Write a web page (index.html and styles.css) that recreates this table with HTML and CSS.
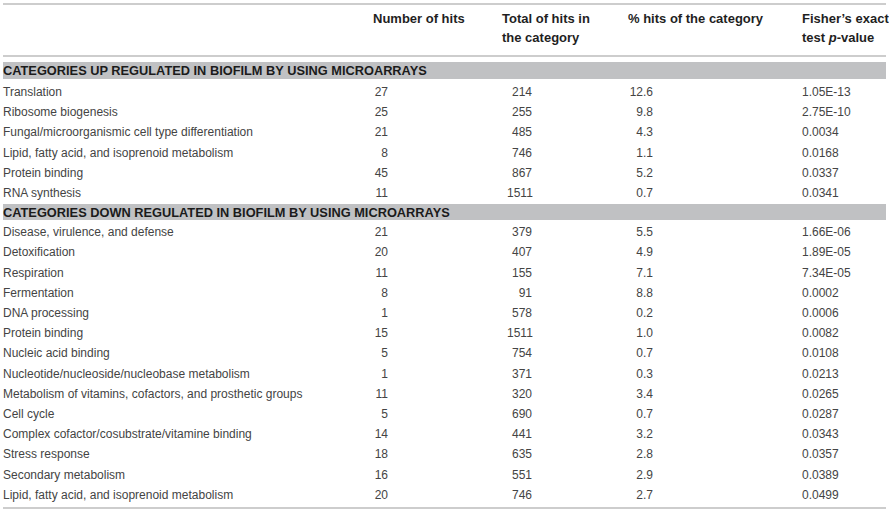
FILE: index.html
```html
<!DOCTYPE html>
<html>
<head>
<meta charset="utf-8">
<link rel="stylesheet" href="styles.css">
</head>
<body>
<div class="wrap">
<table class="tbl">
<colgroup>
<col class="c1"><col class="c2"><col class="c3"><col class="c4"><col class="c5">
</colgroup>
<thead>
<tr class="hdr">
<th></th>
<th>Number of hits</th>
<th>Total of hits in<br>the category</th>
<th>% hits of the category</th>
<th>Fisher’s exact<br>test <i>p</i>-value</th>
</tr>
</thead>
<tbody>
<tr class="sec first"><td colspan="5"><div class="bar">CATEGORIES UP REGULATED IN BIOFILM BY USING MICROARRAYS</div></td></tr>
<tr><td>Translation</td><td><span class="n1">27</span></td><td><span class="n2">214</span></td><td><span class="n3">12.6</span></td><td>1.05E-13</td></tr>
<tr><td>Ribosome biogenesis</td><td><span class="n1">25</span></td><td><span class="n2">255</span></td><td><span class="n3">9.8</span></td><td>2.75E-10</td></tr>
<tr><td>Fungal/microorganismic cell type differentiation</td><td><span class="n1">21</span></td><td><span class="n2">485</span></td><td><span class="n3">4.3</span></td><td>0.0034</td></tr>
<tr><td>Lipid, fatty acid, and isoprenoid metabolism</td><td><span class="n1">8</span></td><td><span class="n2">746</span></td><td><span class="n3">1.1</span></td><td>0.0168</td></tr>
<tr><td>Protein binding</td><td><span class="n1">45</span></td><td><span class="n2">867</span></td><td><span class="n3">5.2</span></td><td>0.0337</td></tr>
<tr><td>RNA synthesis</td><td><span class="n1">11</span></td><td><span class="n2">1511</span></td><td><span class="n3">0.7</span></td><td>0.0341</td></tr>
<tr class="sec"><td colspan="5"><div class="bar">CATEGORIES DOWN REGULATED IN BIOFILM BY USING MICROARRAYS</div></td></tr>
<tr><td>Disease, virulence, and defense</td><td><span class="n1">21</span></td><td><span class="n2">379</span></td><td><span class="n3">5.5</span></td><td>1.66E-06</td></tr>
<tr><td>Detoxification</td><td><span class="n1">20</span></td><td><span class="n2">407</span></td><td><span class="n3">4.9</span></td><td>1.89E-05</td></tr>
<tr><td>Respiration</td><td><span class="n1">11</span></td><td><span class="n2">155</span></td><td><span class="n3">7.1</span></td><td>7.34E-05</td></tr>
<tr><td>Fermentation</td><td><span class="n1">8</span></td><td><span class="n2">91</span></td><td><span class="n3">8.8</span></td><td>0.0002</td></tr>
<tr><td>DNA processing</td><td><span class="n1">1</span></td><td><span class="n2">578</span></td><td><span class="n3">0.2</span></td><td>0.0006</td></tr>
<tr><td>Protein binding</td><td><span class="n1">15</span></td><td><span class="n2">1511</span></td><td><span class="n3">1.0</span></td><td>0.0082</td></tr>
<tr><td>Nucleic acid binding</td><td><span class="n1">5</span></td><td><span class="n2">754</span></td><td><span class="n3">0.7</span></td><td>0.0108</td></tr>
<tr><td>Nucleotide/nucleoside/nucleobase metabolism</td><td><span class="n1">1</span></td><td><span class="n2">371</span></td><td><span class="n3">0.3</span></td><td>0.0213</td></tr>
<tr><td>Metabolism of vitamins, cofactors, and prosthetic groups</td><td><span class="n1">11</span></td><td><span class="n2">320</span></td><td><span class="n3">3.4</span></td><td>0.0265</td></tr>
<tr><td>Cell cycle</td><td><span class="n1">5</span></td><td><span class="n2">690</span></td><td><span class="n3">0.7</span></td><td>0.0287</td></tr>
<tr><td>Complex cofactor/cosubstrate/vitamine binding</td><td><span class="n1">14</span></td><td><span class="n2">441</span></td><td><span class="n3">3.2</span></td><td>0.0343</td></tr>
<tr><td>Stress response</td><td><span class="n1">18</span></td><td><span class="n2">635</span></td><td><span class="n3">2.8</span></td><td>0.0357</td></tr>
<tr><td>Secondary metabolism</td><td><span class="n1">16</span></td><td><span class="n2">551</span></td><td><span class="n3">2.9</span></td><td>0.0389</td></tr>
<tr class="last"><td>Lipid, fatty acid, and isoprenoid metabolism</td><td><span class="n1">20</span></td><td><span class="n2">746</span></td><td><span class="n3">2.7</span></td><td>0.0499</td></tr>
</tbody>
</table>
</div>
</body>
</html>
```

FILE: styles.css
```css
html, body {
  margin: 0;
  padding: 0;
  background: #ffffff;
}
.wrap {
  padding: 3px 3px 0 3px;
}
.tbl {
  width: 883px;
  table-layout: fixed;
  border-collapse: collapse;
  font-family: "Liberation Sans", Arial, sans-serif;
  font-size: 12px;
  color: #444444;
}
.c1 { width: 370px; }
.c2 { width: 129px; }
.c3 { width: 126px; }
.c4 { width: 174px; }
.c5 { width: 84px; }
.tbl th, .tbl td {
  padding: 0;
  text-align: left;
  white-space: nowrap;
}
.hdr th {
  border-top: 2px solid #cdcdcd;
  border-bottom: 2px solid #cdcdcd;
  height: 52px;
  vertical-align: top;
  padding-top: 4px;
  font-size: 13px;
  font-weight: bold;
  color: #1f1f1f;
  line-height: 19px;
  box-sizing: border-box;
}
.hdr th i { font-style: italic; }
.tbl tbody tr td {
  height: 20.2px;
  line-height: 20.2px;
  vertical-align: middle;
}
.tbl tbody tr.sec td {
  height: auto;
  line-height: 16px;
  padding: 1px 0 2px 0;
}
.tbl tbody tr.sec.first td {
  padding: 5px 0 3px 0;
}
.tbl tbody tr.sec.first .bar {
  height: 17px;
}
.bar {
  background: #c0c1c3;
  height: 16px;
  font-weight: bold;
  color: #1b1b1b;
  font-size: 12.8px;
  line-height: 17px;
}
.tbl tbody tr.last td {
  border-bottom: 2px solid #cdcdcd;
  padding-bottom: 2px;
}
.n1, .n2, .n3 {
  display: inline-block;
  text-align: right;
}
.n1 { width: 15px; }
.n2 { width: 25px; margin-left: 5px; }
.n3 { width: 25px; }
```
